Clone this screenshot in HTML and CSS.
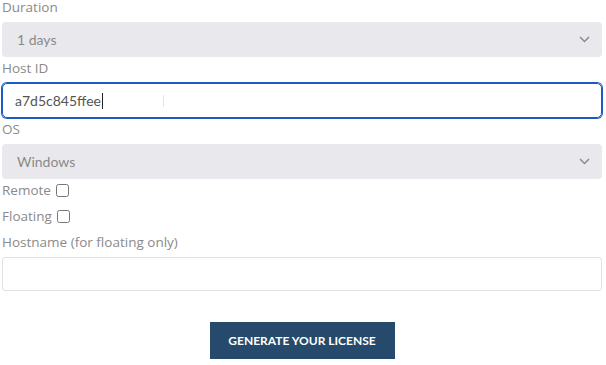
FILE: index.html
```html
<!DOCTYPE html>
<html lang="en">
<head>
  <meta charset="UTF-8" />
  <meta name="viewport" content="width=device-width, initial-scale=1.0" />
  <title>Generate License</title>
  <link rel="stylesheet" href="styles.css">
</head>
<body>
  <form class="license-form" onsubmit="return false">
    <label class="label" for="duration">Duration</label>
    <div class="select">
      <span>1 days</span>
      <svg class="chevron" width="11" height="7" viewBox="0 0 11 7"><path d="M1 1l4.5 4.5L10 1" fill="none" stroke="#8a8a8a" stroke-width="1.5"/></svg>
    </div>

    <label class="label" for="host">Host ID</label>
    <div class="field focused" id="host">
      <span class="value">a7d5c845ffee</span><span class="caret"></span>
      <span class="ibeam"></span>
    </div>

    <label class="label" for="os">OS</label>
    <div class="select">
      <span>Windows</span>
      <svg class="chevron" width="11" height="7" viewBox="0 0 11 7"><path d="M1 1l4.5 4.5L10 1" fill="none" stroke="#8a8a8a" stroke-width="1.5"/></svg>
    </div>

    <label class="check-row">Remote<input type="checkbox"></label>
    <label class="check-row">Floating<input type="checkbox"></label>

    <label class="label" for="hostname">Hostname (for floating only)</label>
    <div class="field" id="hostname"></div>

    <div class="actions">
      <button class="generate" type="submit">Generate your license</button>
    </div>
  </form>
</body>
</html>
```

FILE: styles.css
```css
:root {
  --label: #8a8a8a;
  --select-bg: #e9e9ed;
  --focus: #1a5cc0;
  --navy: #264a6b;
}

* {
  margin: 0;
  padding: 0;
  box-sizing: border-box;
  font-family: 'Lato', sans-serif;
}

body {
  background: #ffffff;
  overflow: hidden;
}

.license-form {
  display: flex;
  flex-direction: column;
  padding: 0 4px 0 2px;
  margin-top: -2px;
}

.label,
.check-row {
  font-family: 'Open Sans', sans-serif;
  font-size: 13.5px;
  line-height: 18px;
  color: var(--label);
}

.label {
  display: block;
  margin-bottom: 6px;
}

.select {
  height: 35px;
  background: var(--select-bg);
  border-radius: 4px;
  display: flex;
  align-items: center;
  justify-content: space-between;
  padding: 0 12px 0 15px;
  font-size: 14px;
  color: var(--label);
  margin-bottom: 2px;
}

.field {
  height: 35px;
  border: 1px solid #e2e2e2;
  border-radius: 4px;
  display: flex;
  align-items: center;
  padding: 0 12px;
  font-size: 14px;
  color: #555;
  margin-bottom: 2px;
}

.field.focused {
  border-color: var(--focus);
  box-shadow: 0 0 0 1px var(--focus);
  border-radius: 5px;
}

.caret {
  width: 1px;
  height: 16px;
  background: #222;
  margin-left: 1px;
}

.ibeam {
  width: 1px;
  height: 12px;
  background: #e4e4e4;
  margin-left: 60px;
}

.check-row {
  display: flex;
  align-items: center;
  margin-bottom: 8px;
}

.check-row input {
  width: 13px;
  height: 13px;
  margin: 0 0 0 5px;
}

#hostname {
  height: 34px;
  border-radius: 3px;
}

.actions {
  display: flex;
  justify-content: center;
  margin-top: 29px;
}

.generate {
  width: 185px;
  height: 37px;
  background: var(--navy);
  color: #ffffff;
  border: none;
  font-size: 12px;
  font-weight: 700;
  text-transform: uppercase;
  cursor: pointer;
}
```
